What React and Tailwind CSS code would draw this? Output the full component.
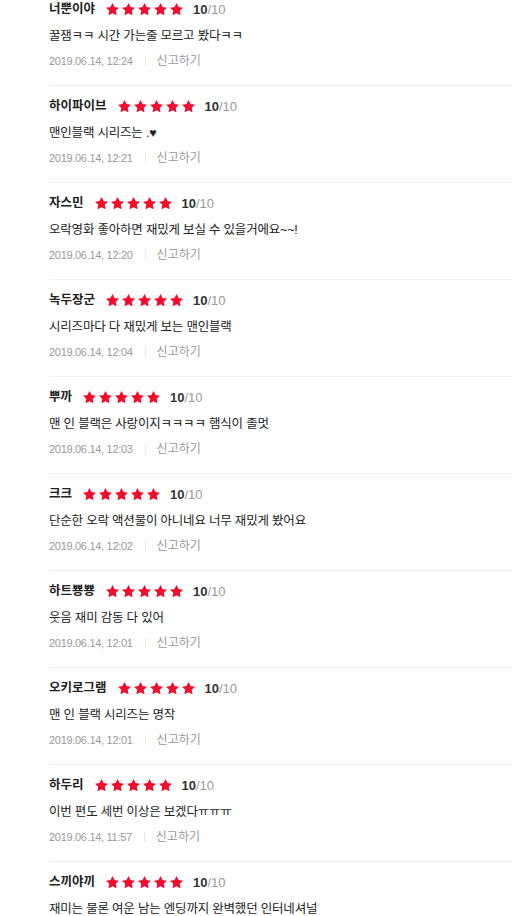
import React from "react";

const reviews = [
  ["너뿐이야", "꿀잼ㅋㅋ 시간 가는줄 모르고 봤다ㅋㅋ", "12:24"],
  ["하이파이브", "맨인블랙 시리즈는 .♥", "12:21"],
  ["자스민", "오락영화 좋아하면 재밌게 보실 수 있을거에요~~!", "12:20"],
  ["녹두장군", "시리즈마다 다 재밌게 보는 맨인블랙", "12:04"],
  ["뿌까", "맨 인 블랙은 사랑이지ㅋㅋㅋㅋ 햄식이 졸멋", "12:03"],
  ["크크", "단순한 오락 액션물이 아니네요 너무 재밌게 봤어요", "12:02"],
  ["하트뿅뿅", "웃음 재미 감동 다 있어", "12:01"],
  ["오키로그램", "맨 인 블랙 시리즈는 명작", "12:01"],
  ["하두리", "이번 편도 세번 이상은 보겠다ㅠㅠㅠ", "11:57"],
  ["스끼야끼", "재미는 물론 여운 남는 엔딩까지 완벽했던 인터네셔널", "12:00"],
];

function Star() {
  return (
    <svg viewBox="2 2 20 19.3" className="w-[13px] h-[12.5px]" aria-hidden="true">
      <path
        d="M12 2l3.09 6.26L22 9.27l-5 4.87 1.18 6.88L12 17.77l-6.18 3.25L7 14.14 2 9.27l6.91-1.01L12 2z"
        fill="#f40a2c"
      />
    </svg>
  );
}

function Review({ name, text, time }) {
  return (
    <li className="border-t border-[#f0f0f0] pt-[11px] pb-[15px]">
      <div className="flex items-center h-[18px]">
        <span className="text-[12.5px] font-bold text-[#222]">{name}</span>
        <span className="flex items-center gap-[3px] ml-[11px]">
          <Star />
          <Star />
          <Star />
          <Star />
          <Star />
        </span>
        <span className="ml-[10px] text-[13px] leading-none">
          <b className="font-bold text-[#333]">10</b>
          <span className="text-[#999]">/10</span>
        </span>
      </div>
      <p className="mt-[9px] h-[18px] flex items-center text-[12.5px] text-[#222] tracking-[-0.2px]">{text}</p>
      <div className="mt-[7px] h-[18px] flex items-center text-[#999]">
        <span className="text-[11px] tracking-[-0.3px]">2019.06.14, {time}</span>
        <span className="ml-[12px] mr-[11px] w-px h-[10px] bg-[#e8e8e8]" />
        <span className="text-[12px]">신고하기</span>
      </div>
    </li>
  );
}

export default function App() {
  return (
    <div
      className="w-[512px] h-[916px] overflow-hidden bg-white"
      style={{ fontFamily: '"Liberation Sans", "Noto Sans CJK KR", sans-serif' }}
    >
      <ul className="pl-[49px] -mt-[12px]">
        {reviews.map(([n, t, tm]) => (
          <Review key={n} name={n} text={t} time={tm} />
        ))}
      </ul>
    </div>
  );
}
